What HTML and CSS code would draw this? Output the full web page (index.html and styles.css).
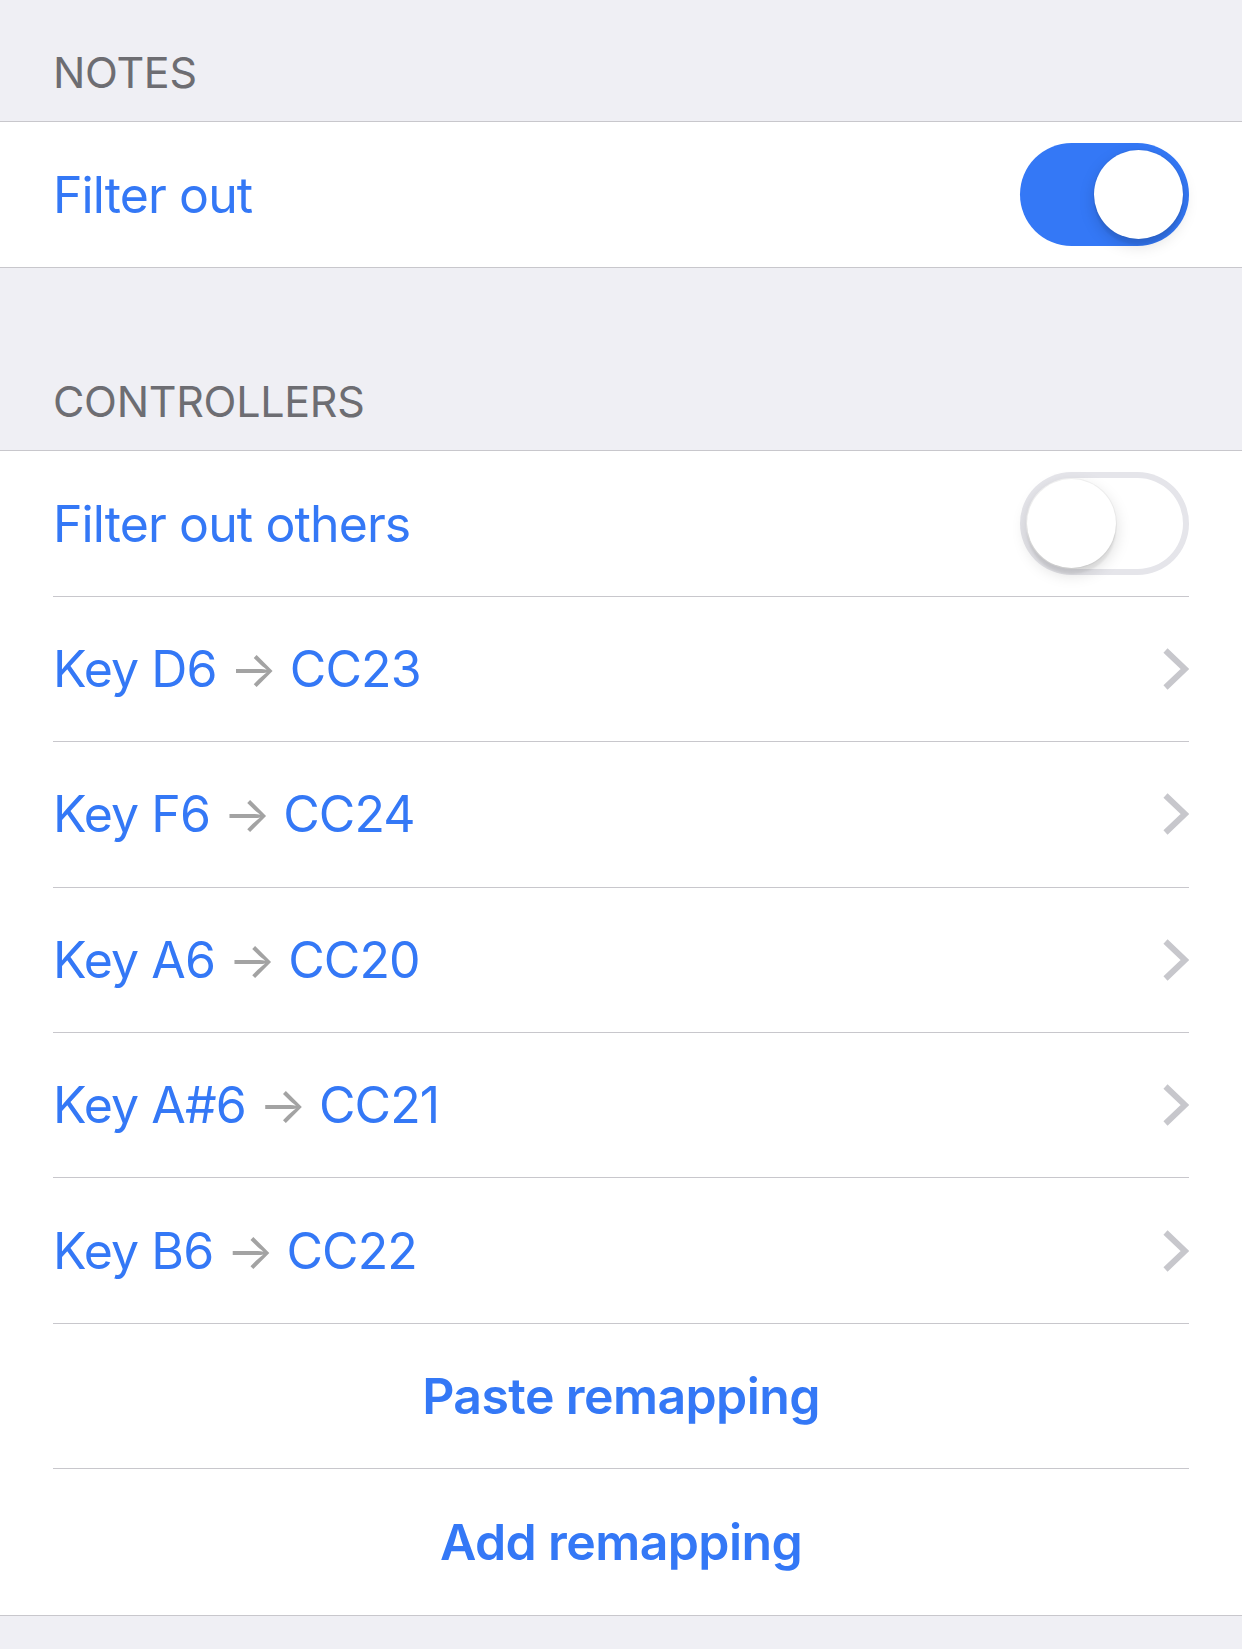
FILE: index.html
```html
<!DOCTYPE html>
<html lang="en">
<head>
  <meta charset="UTF-8">
  <meta name="viewport" content="width=device-width, initial-scale=1.0">
  <title>MIDI Filter</title>
  <link rel="stylesheet" href="styles.css">
</head>
<body>
  <div class="section-header first">NOTES</div>
  <div class="group">
    <div class="row">
      <span class="label">Filter out</span>
      <div class="switch on"><span class="knob"></span></div>
    </div>
  </div>

  <div class="section-header second">CONTROLLERS</div>
  <div class="group">
    <div class="row">
      <span class="label">Filter out others</span>
      <div class="switch"><span class="knob"></span></div>
    </div>
    <div class="row">
      <span class="label">Key D6 <span class="arrow">→</span> CC23</span>
      <svg class="chevron" viewBox="0 0 26 42"><polyline points="2.5,2.5 22,21 2.5,39.5"/></svg>
    </div>
    <div class="row">
      <span class="label">Key F6 <span class="arrow">→</span> CC24</span>
      <svg class="chevron" viewBox="0 0 26 42"><polyline points="2.5,2.5 22,21 2.5,39.5"/></svg>
    </div>
    <div class="row">
      <span class="label">Key A6 <span class="arrow">→</span> CC20</span>
      <svg class="chevron" viewBox="0 0 26 42"><polyline points="2.5,2.5 22,21 2.5,39.5"/></svg>
    </div>
    <div class="row">
      <span class="label">Key A#6 <span class="arrow">→</span> CC21</span>
      <svg class="chevron" viewBox="0 0 26 42"><polyline points="2.5,2.5 22,21 2.5,39.5"/></svg>
    </div>
    <div class="row">
      <span class="label">Key B6 <span class="arrow">→</span> CC22</span>
      <svg class="chevron" viewBox="0 0 26 42"><polyline points="2.5,2.5 22,21 2.5,39.5"/></svg>
    </div>
    <div class="row action">
      <span class="label">Paste remapping</span>
    </div>
    <div class="row action">
      <span class="label">Add remapping</span>
    </div>
  </div>
</body>
</html>
```

FILE: styles.css
```css
body {
  margin: 0;
  background-color: #efeff4;
  font-family: Inter, 'Liberation Sans', sans-serif;
}
.section-header {
  display: flex;
  align-items: flex-end;
  box-sizing: border-box;
  padding: 0 53px 27px;
  font-size: 43px;
  line-height: 1;
  letter-spacing: -0.3px;
  color: #6d6d72;
}
.section-header.first {
  height: 121px;
}
.section-header.second {
  height: 182px;
}
.group {
  background-color: #fff;
  border-top: 1px solid #c8c7cc;
  border-bottom: 1px solid #c8c7cc;
}
.row {
  display: flex;
  align-items: center;
  justify-content: space-between;
  box-sizing: border-box;
  height: 145.4px;
  margin: 0 53px;
  border-bottom: 1px solid #c8c7cc;
}
.row:last-child {
  border-bottom: none;
}
.label {
  font-size: 50px;
  color: #3478f6;
  letter-spacing: -0.9px;
}
.arrow {
  color: #a3a3a3;
}
.action {
  justify-content: center;
}
.action .label {
  font-weight: 600;
  letter-spacing: -0.6px;
}
.chevron {
  width: 26px;
  height: 42px;
  fill: none;
  stroke: #c7c7cc;
  stroke-width: 6;
}
.switch {
  display: flex;
  align-items: center;
  box-sizing: border-box;
  width: 169px;
  height: 103px;
  padding: 0 7px;
  border-radius: 52px;
  background-color: #fff;
  box-shadow: inset 0 0 0 6px #e5e5ea;
}
.switch.on {
  justify-content: flex-end;
  padding: 0 6px;
  background-color: #3478f6;
  box-shadow: none;
}
.knob {
  width: 89px;
  height: 89px;
  border-radius: 50%;
  background-color: #fff;
  box-shadow: 0 6px 16px rgba(0, 0, 0, 0.15), 0 6px 2px rgba(0, 0, 0, 0.06), 0 0 0 1px rgba(0, 0, 0, 0.04);
}
```
